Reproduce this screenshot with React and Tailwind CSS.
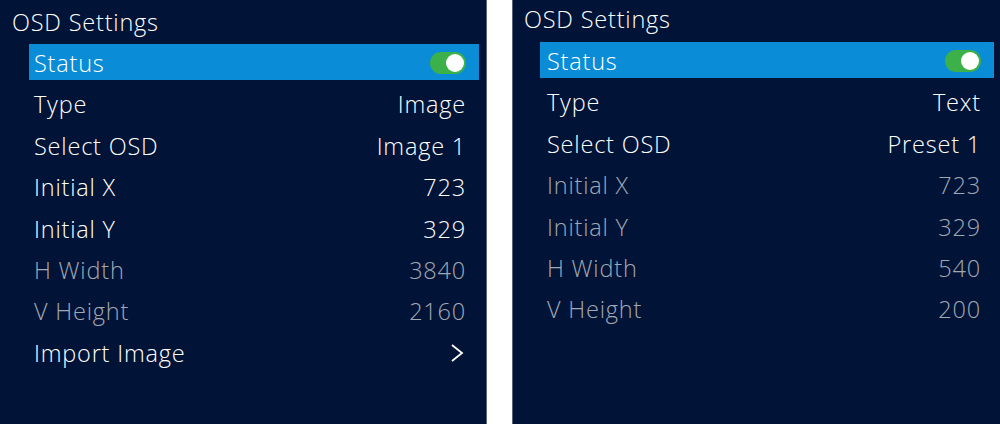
import React from "react";

const font = { fontFamily: "'Open Sans', 'Noto Sans', sans-serif" };

function Toggle() {
  return (
    <div className="w-[36px] h-[22px] rounded-full bg-[#3cb149] flex items-center justify-end pr-[2px]">
      <div className="w-[18px] h-[18px] rounded-full bg-white" />
    </div>
  );
}

function Row({ label, value, active, dim, toggle, chevron, lp, rp }) {
  const txt = `text-[23.5px] font-[350] leading-[30px] tracking-[0.8px] ${dim ? "text-[#a3a8b4]" : "text-white"}`;
  return (
    <div
      className={`h-[36px] flex items-center justify-between pt-[2px] ${active ? "bg-[#0a8dd6]" : ""}`}
      style={{ paddingLeft: lp, paddingRight: rp }}
    >
      <span className={txt}>{label}</span>
      {toggle ? (
        <Toggle />
      ) : chevron ? (
        <svg width="16" height="22" viewBox="0 0 16 22" className="mr-[1px]">
          <path d="M3 3 L13 11 L3 19" fill="none" stroke="white" strokeWidth="1.8" />
        </svg>
      ) : (
        <span className={txt}>{value}</span>
      )}
    </div>
  );
}

function Panel({ rows, className, listClass, titleClass, lp, rp }) {
  return (
    <div className={`bg-[#011437] h-full ${className}`}>
      <div className={`text-[23.5px] font-[350] text-white tracking-[0.8px] ${titleClass}`}>OSD Settings</div>
      <div className={`flex flex-col gap-[5.4px] ${listClass}`}>
        {rows.map((r, i) => (
          <Row key={i} {...r} lp={lp} rp={rp} />
        ))}
      </div>
    </div>
  );
}

export default function App() {
  const left = [
    { label: "Status", active: true, toggle: true },
    { label: "Type", value: "Image" },
    { label: "Select OSD", value: "Image 1" },
    { label: "Initial X", value: "723" },
    { label: "Initial Y", value: "329" },
    { label: "H Width", value: "3840", dim: true },
    { label: "V Height", value: "2160", dim: true },
    { label: "Import Image", chevron: true },
  ];
  const right = [
    { label: "Status", active: true, toggle: true },
    { label: "Type", value: "Text" },
    { label: "Select OSD", value: "Preset 1" },
    { label: "Initial X", value: "723", dim: true },
    { label: "Initial Y", value: "329", dim: true },
    { label: "H Width", value: "540", dim: true },
    { label: "V Height", value: "200", dim: true },
  ];
  return (
    <div className="w-[1000px] h-[424px] bg-white flex overflow-hidden" style={font}>
      <Panel
        rows={left}
        className="w-[487px] border-r border-[#5a6478]"
        titleClass="pl-[12px] pt-[7px] h-[44px] leading-[30px]"
        listClass="ml-[29px] mr-[7px]"
        lp={5}
        rp={13}
      />
      <div className="w-[25px]" />
      <Panel
        rows={right}
        className="flex-1 border-l border-[#5a6478]"
        titleClass="pl-[11px] pt-[4px] h-[42px] leading-[30px]"
        listClass="ml-[27px] mr-[6px]"
        lp={7}
        rp={13}
      />
    </div>
  );
}
